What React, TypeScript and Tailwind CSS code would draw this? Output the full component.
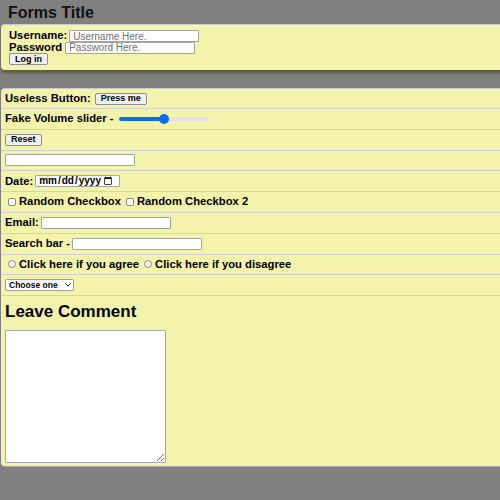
import React from 'react';

const base = 'flex items-center border-b border-[#cfcfcf] px-1';
const row = `${base} gap-[2px] h-[20.8px]`;
const label = 'text-[11.25px] font-bold text-black leading-none whitespace-nowrap';
const input =
  'h-[12px] py-0 bg-white border border-[#a3a3a3] rounded-[1px] px-[3px] text-[10px] leading-none text-black placeholder:text-[#6f6f6f] outline-none';
const btn =
  'h-[12px] px-[5px] bg-[#efefef] border border-[#8f8f8f] rounded-[2px] text-[9px] font-bold text-black leading-none';
const check = 'appearance-none shrink-0 w-[8px] h-[8px] m-0 bg-white border border-[#8a8a8a] rounded-[2px]';
const radio = 'appearance-none shrink-0 w-[8px] h-[8px] m-0 bg-white border border-[#8a8a8a] rounded-full';

export default function App() {
  return (
    <div className="min-h-[500px] bg-[#808080] pt-[3px] pb-8 font-['Liberation_Sans',Arial,sans-serif]">
      <h1 className="px-2 text-[16px] font-bold text-[#111] leading-[19px]">Forms Title</h1>

      {/* login panel */}
      <div className="mt-[2px] ml-[1px] -mr-2 h-[46px] bg-[#f3f3ab] border-t border-[#c9c9c9] rounded-l-[4px] px-2 pt-[5px] shadow-[0_3px_3px_rgba(60,60,0,0.55)]">
        <div className="flex items-center gap-[2px] h-[12px]">
          <span className={label}>Username:</span>
          <input className={`${input} w-[130px]`} placeholder="Username Here." />
        </div>
        <div className="flex items-center gap-[3px] h-[11px]">
          <span className={label}>Password</span>
          <input type="password" className={`${input} w-[130px]`} placeholder="Password Here." />
        </div>
        <div className="flex">
          <button className={btn}>Log in</button>
        </div>
      </div>

      {/* main form */}
      <div className="mt-[18px] ml-[1px] -mr-2 bg-[#f3f3ab] border-t border-[#c9c9c9] rounded-l-[4px] pb-[3px] shadow-[0_1px_0_#a8a8a8]">
        <div className={`${base} gap-1 h-[20px]`}>
          <span className={label}>Useless Button:</span>
          <button className={btn}>Press me</button>
        </div>
        <div className={`${base} gap-[5px] h-[20.8px]`}>
          <span className={label}>Fake Volume slider -</span>
          <input
            type="range"
            defaultValue={50}
            className="w-[90px] h-[4px] rounded-full appearance-none bg-[linear-gradient(to_right,#0b6ee6_50%,#e3e3e3_50%)] [&::-webkit-slider-thumb]:appearance-none [&::-webkit-slider-thumb]:w-[10px] [&::-webkit-slider-thumb]:h-[10px] [&::-webkit-slider-thumb]:rounded-full [&::-webkit-slider-thumb]:bg-[#0b6ee6]"
          />
        </div>
        <div className={row}>
          <button className={btn}>Reset</button>
        </div>
        <div className={row}>
          <input className={`${input} w-[130px]`} />
        </div>
        <div className={row}>
          <span className={label}>Date:</span>
          <input type="date" className={`${input} w-[85px] pl-[2px] pr-[4px] text-[7.5px] font-bold text-[#222]`} />
        </div>
        <div className={`${base} gap-[3px] h-[20.8px]`}>
          <input type="checkbox" className={`${check} ml-[3px]`} />
          <span className={label}>Random Checkbox</span>
          <input type="checkbox" className={`${check} ml-[2px]`} />
          <span className={label}>Random Checkbox 2</span>
        </div>
        <div className={row}>
          <span className={label}>Email:</span>
          <input type="email" className={`${input} w-[130px]`} />
        </div>
        <div className={row}>
          <span className={label}>Search bar -</span>
          <input type="search" className={`${input} w-[130px]`} />
        </div>
        <div className={`${base} gap-[3px] h-[20.8px]`}>
          <input type="radio" name="agree" className={`${radio} ml-[3px]`} />
          <span className={label}>Click here if you agree</span>
          <input type="radio" name="agree" className={`${radio} ml-[2px]`} />
          <span className={label}>Click here if you disagree</span>
        </div>
        <div className={row}>
          <div className="relative">
            <select className="block appearance-none h-[12px] w-[69px] bg-white border border-[#9e9e9e] rounded-[2px] text-[8.5px] font-bold leading-none text-black pl-[3px] py-0">
              <option>Choose one</option>
              <option>Option 1</option>
              <option>Option 2</option>
            </select>
            <svg
              className="absolute right-[3px] top-[4px] w-[6px] h-[4px] pointer-events-none"
              viewBox="0 0 6 4"
              fill="none"
              stroke="#222"
              strokeWidth="1"
            >
              <path d="M0.5 0.5 L3 3 L5.5 0.5" />
            </svg>
          </div>
        </div>
        <h2 className="px-1 mt-[6px] text-[17px] font-bold text-black leading-[20px]">Leave Comment</h2>
        <div className="px-1 mt-[8px]">
          <textarea className="block w-[161px] h-[133px] bg-white border border-[#a9a9a9] rounded-[1px]" />
        </div>
      </div>
    </div>
  );
}
